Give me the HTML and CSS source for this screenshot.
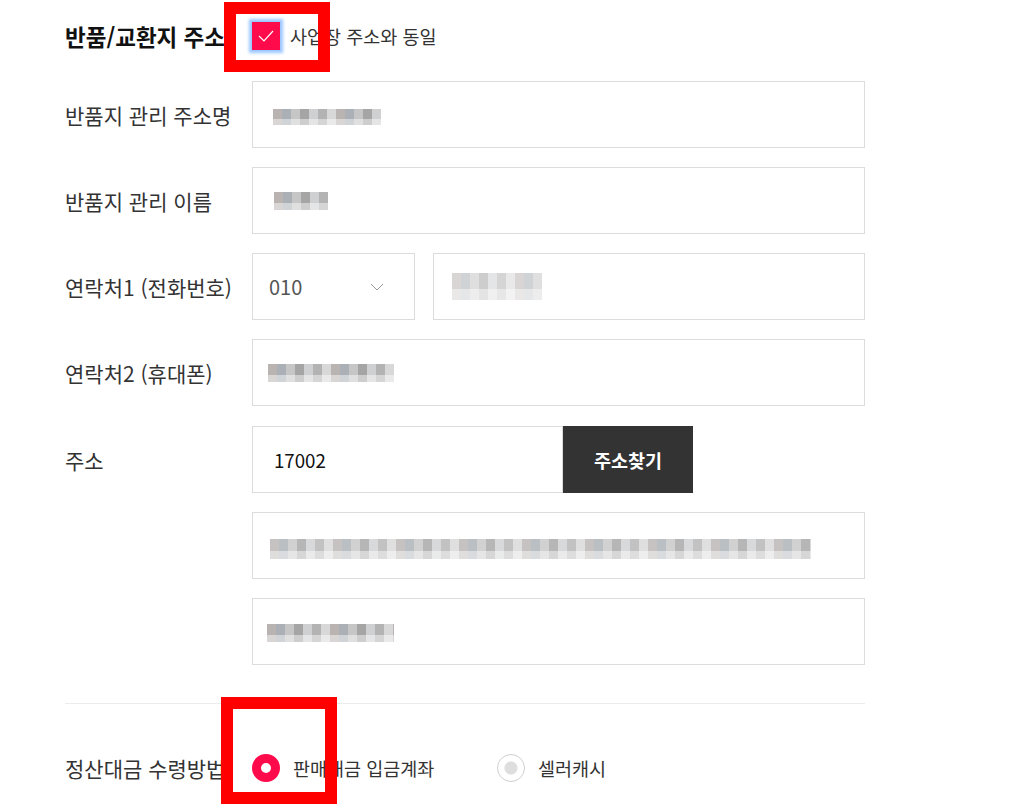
FILE: index.html
```html
<!DOCTYPE html>
<html lang="ko">
<head>
<meta charset="utf-8">
<link rel="stylesheet" href="styles.css">
</head>
<body>
<div class="form">
  <div class="head-row">
    <div class="title">반품/교환지 주소</div>
    <label class="check">
      <span class="checkbox"><svg width="16" height="12" viewBox="0 0 16 12"><polyline points="1,6 6,11 15,1" fill="none" stroke="#fff" stroke-width="1.2"/></svg></span>
      <span class="check-text">사업장 주소와 동일</span>
    </label>
  </div>

  <div class="row">
    <div class="label">반품지 관리 주소명</div>
    <div class="field"><div class="input"><span class="mosaic m1"></span></div></div>
  </div>
  <div class="row">
    <div class="label">반품지 관리 이름</div>
    <div class="field"><div class="input"><span class="mosaic m2"></span></div></div>
  </div>
  <div class="row">
    <div class="label">연락처1 (전화번호)</div>
    <div class="field phone">
      <div class="input select"><span class="sel-val">010</span>
        <svg class="chev" width="14" height="8" viewBox="0 0 14 8"><polyline points="1,1 7,7 13,1" fill="none" stroke="#999" stroke-width="1"/></svg>
      </div>
      <div class="input phone-num"><span class="mosaic m3"></span></div>
    </div>
  </div>
  <div class="row row-wide">
    <div class="label">연락처2 (휴대폰)</div>
    <div class="field"><div class="input"><span class="mosaic m4"></span></div></div>
  </div>
  <div class="row">
    <div class="label">주소</div>
    <div class="field postal">
      <div class="input zip"><span class="zip-val">17002</span></div>
      <button class="btn">주소찾기</button>
    </div>
  </div>
  <div class="row">
    <div class="label"></div>
    <div class="field"><div class="input"><span class="mosaic m5"></span></div></div>
  </div>
  <div class="row">
    <div class="label"></div>
    <div class="field"><div class="input"><span class="mosaic m6"></span></div></div>
  </div>

  <div class="divider"></div>

  <div class="radio-row">
    <div class="label">정산대금 수령방법</div>
    <div class="radios">
      <label class="radio r-first"><span class="dot on"></span><span>판매대금 입금계좌</span></label>
      <label class="radio"><span class="dot off"></span><span>셀러캐시</span></label>
    </div>
  </div>
</div>

<div class="mark mark1"></div>
<div class="mark mark2"></div>
</body>
</html>
```

FILE: styles.css
```css
* { box-sizing: border-box; }
html, body { margin: 0; padding: 0; background: #fff; }
body {
  font-family: "Noto Sans CJK KR", "Noto Sans", sans-serif;
  color: #333;
  width: 1033px;
  height: 810px;
  overflow: hidden;
  position: relative;
}
.form {
  width: 865px;
  padding-left: 65px;
  display: flex;
  flex-direction: column;
}
.head-row {
  height: 72px;
  display: grid;
  grid-template-columns: 187px 1fr;
  align-items: center;
  margin-bottom: 9px;
}
.title {
  font-size: 22.5px;
  font-weight: 700;
  color: #111;
  white-space: nowrap;
}
.check {
  display: flex;
  align-items: center;
  gap: 10px;
}
.checkbox {
  width: 28px;
  height: 28px;
  background: #ff0a4b;
  display: flex;
  align-items: center;
  justify-content: center;
  box-shadow: 0 0 3px 3px rgba(120, 180, 255, 0.75);
}
.check-text {
  font-size: 18.5px;
  color: #333;
}
.row {
  display: grid;
  grid-template-columns: 187px 613px;
  align-items: center;
  height: 67px;
  margin-bottom: 19px;
}
.row-wide { margin-bottom: 20px; }
.label {
  font-size: 21px;
  color: #333;
  white-space: nowrap;
}
.field { height: 67px; display: flex; }
.input {
  flex: 1;
  height: 67px;
  border: 1px solid #dcdcdc;
  display: flex;
  align-items: center;
  padding-left: 20px;
  background: #fff;
}
.phone { gap: 18px; }
.select {
  flex: 0 0 163px;
  padding-left: 16px;
  justify-content: space-between;
  padding-right: 30px;
}
.sel-val { font-size: 20px; color: #555; }
.phone-num { padding-left: 18px; }
.postal { width: 441px; }
.zip { flex: 0 0 311px; padding-left: 21px; }
.zip-val { font-size: 18.7px; color: #111; }
.btn {
  flex: 0 0 130px;
  height: 67px;
  border: 0;
  background: #333;
  color: #fff;
  font-family: inherit;
  font-size: 18.5px;
  font-weight: 700;
}
.mosaic {
  display: block;
  background-image:
    linear-gradient(to bottom, rgba(255,255,255,0) 60%, rgba(255,255,255,0.45) 60%),
    repeating-linear-gradient(to right, #b9b4b2 0 9px, #aab0b6 9px 18px, #c6c6c6 18px 27px, #a6a5a5 27px 36px, #cfd0d2 36px 45px, #b3b3b3 45px 54px, #d8d8d8 54px 63px);
}
.m1 { width: 108px; height: 16px; margin-top: 4px; }
.m2 { width: 54px; height: 18px; margin-left: 1px; }
.m3 { width: 90px; height: 27px; opacity: 0.55; }
.m4 { width: 126px; height: 18px; margin-left: -5px; }
.m5 { width: 541px; height: 20px; margin-left: -3px; margin-top: 6px; opacity: 0.8; }
.m6 { width: 127px; height: 18px; margin-left: -6px; margin-top: 2px; }
.divider {
  width: 800px;
  height: 1px;
  background: #ececec;
  margin-top: 19px;
}
.radio-row {
  display: grid;
  grid-template-columns: 187px 1fr;
  align-items: center;
  height: 128px;
}
.radios { display: flex; align-items: center; }
.radio {
  display: flex;
  align-items: center;
  gap: 13px;
  font-size: 18.5px;
  color: #333;
}
.r-first { width: 245px; }
.dot {
  width: 28px;
  height: 28px;
  border-radius: 50%;
  display: block;
  flex: none;
}
.dot.on {
  border: 9px solid #ff0a4b;
  background: #fff;
}
.dot.off {
  border: 1px solid #cfcfcf;
  background: radial-gradient(circle, #dedede 0 6px, #fff 7px);
}
.mark {
  position: absolute;
  border: 12px solid #ff0000;
}
.mark1 { left: 224px; top: 2px; width: 106px; height: 70px; }
.mark2 { left: 221px; top: 697px; width: 116px; height: 107px; }
```
